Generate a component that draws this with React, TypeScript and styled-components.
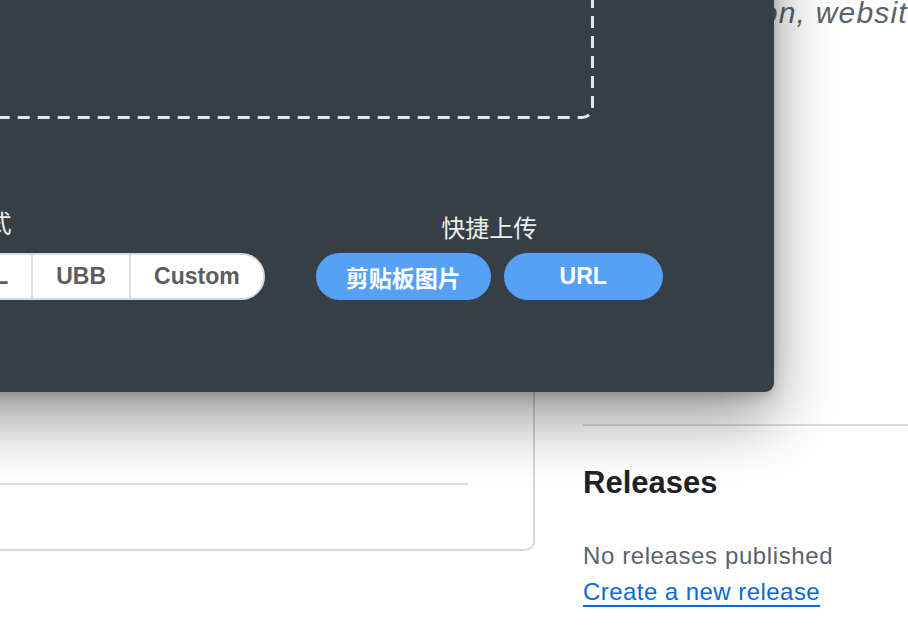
import React from 'react';
import styled, { createGlobalStyle } from 'styled-components';

const GlobalStyle = createGlobalStyle`
  html, body {
    margin: 0;
    padding: 0;
    background: #ffffff;
  }
  body {
    font-family: 'Liberation Sans', 'Noto Sans CJK SC', sans-serif;
  }
`;

const formats = ['URL', 'Markdown', 'HTML', 'UBB', 'Custom'];
const selectedFormat = 'Markdown';

const Viewport = styled.div`
  position: relative;
  width: 908px;
  height: 636px;
  overflow: hidden;
  background: #ffffff;
`;

/* github repo page behind the upload popup */
const RepoLayout = styled.div`
  display: flex;
  align-items: flex-start;
  gap: 48px;
  margin-left: -401px;
`;

const MainColumn = styled.div`
  width: 936px;
  flex-shrink: 0;
`;

const ReadmeCard = styled.div`
  box-sizing: border-box;
  margin-top: -20px;
  height: 571px;
  border: 2px solid #d0d7de;
  border-radius: 10px;
  background: #ffffff;
  display: flex;
  flex-direction: column;
  justify-content: flex-end;
`;

const CardRule = styled.div`
  height: 2px;
  background: #d8dee4;
  margin-right: 65px;
`;

const CardFooter = styled.div`
  height: 64px;
`;

const Sidebar = styled.aside`
  width: 480px;
  flex-shrink: 0;
  color: #1f2328;
`;

const Description = styled.p`
  margin: -5px 0 0;
  text-indent: 5px;
  font-size: 30px;
  line-height: 36px;
  font-style: italic;
  letter-spacing: 1.2px;
  color: #59636e;
  white-space: nowrap;
`;

const SideRule = styled.div`
  height: 2px;
  margin-top: 393px;
  background: #d8dee4;
`;

const SideHeading = styled.h2`
  margin: 39px 0 0;
  font-size: 31px;
  line-height: 36px;
  font-weight: 700;
  color: #1f2328;
`;

const Muted = styled.div`
  margin-top: 40px;
  font-size: 24px;
  line-height: 30px;
  letter-spacing: 0.6px;
  color: #59636e;
`;

const ReleaseLink = styled.a`
  display: inline-block;
  margin-top: 6px;
  font-size: 24px;
  line-height: 30px;
  letter-spacing: 0.45px;
  color: #0969da;
  text-decoration: underline;
  text-decoration-thickness: 2px;
  text-underline-offset: 5px;
`;

/* upload popup */
const Popup = styled.div`
  position: absolute;
  left: -449px;
  top: -300px;
  width: 1223px;
  box-sizing: border-box;
  padding: 40px 0 92px;
  background: #363f45;
  border-radius: 9px;
  box-shadow: 0 26px 64px rgba(0, 0, 0, 0.42), 0 4px 14px rgba(0, 0, 0, 0.18);
  display: flex;
  flex-direction: column;
  align-items: center;
`;

const DropZone = styled.div`
  width: 863px;
  height: 379px;

  svg {
    display: block;
  }
`;

const ControlRow = styled.div`
  display: flex;
  align-items: flex-end;
  gap: 51px;
  margin-top: 93px;
`;

const ControlGroup = styled.div`
  display: flex;
  flex-direction: column;
  align-items: center;
`;

const GroupLabel = styled.div<{ $gap: number }>`
  font-size: 24px;
  line-height: 24px;
  color: #eceeef;
  margin-bottom: ${(p) => p.$gap}px;
`;

const Segmented = styled.div`
  display: flex;
  height: 47px;
  box-sizing: border-box;
  border: 2px solid #d6d8da;
  border-radius: 24px;
  overflow: hidden;
  background: #ffffff;
`;

const Segment = styled.div<{ $active?: boolean }>`
  display: flex;
  align-items: center;
  padding: 0 23px;
  font-size: 23px;
  font-weight: 700;
  color: ${(p) => (p.$active ? '#ffffff' : '#5b5d60')};
  background: ${(p) => (p.$active ? '#56a0f6' : '#ffffff')};

  & + & {
    border-left: 2px solid #dcdee0;
  }
`;

const ButtonRow = styled.div`
  display: flex;
  gap: 13px;
`;

const PillButton = styled.button`
  height: 47px;
  min-width: 159px;
  padding: 0 30px;
  border: 0;
  border-radius: 24px;
  background: #56a0f6;
  color: #ffffff;
  font-family: 'Liberation Sans', 'Noto Sans CJK SC', sans-serif;
  font-size: 23px;
  font-weight: 700;
`;

const DashedFrame: React.FC<{ w: number; h: number }> = ({ w, h }) => (
  <svg width={w} height={h} viewBox={`0 0 ${w} ${h}`}>
    <rect
      x={1.5}
      y={1.5}
      width={w - 3}
      height={h - 3}
      rx={10}
      fill="none"
      stroke="#e4e6e7"
      strokeWidth={3}
      strokeDasharray="12 8"
    />
  </svg>
);

export default function App() {
  return (
    <>
      <GlobalStyle />
      <Viewport>
        <RepoLayout>
          <MainColumn>
            <ReadmeCard>
              <CardRule />
              <CardFooter />
            </ReadmeCard>
          </MainColumn>

          <Sidebar>
            <Description>No description, website, or topics provided.</Description>
            <SideRule />
            <SideHeading>Releases</SideHeading>
            <Muted>No releases published</Muted>
            <ReleaseLink href="#">Create a new release</ReleaseLink>
          </Sidebar>
        </RepoLayout>

        <Popup>
          <DropZone>
            <DashedFrame w={863} h={379} />
          </DropZone>
          <ControlRow>
            <ControlGroup>
              <GroupLabel $gap={17}>链接格式</GroupLabel>
              <Segmented>
                {formats.map((f) => (
                  <Segment key={f} $active={f === selectedFormat}>
                    {f}
                  </Segment>
                ))}
              </Segmented>
            </ControlGroup>

            <ControlGroup>
              <GroupLabel $gap={12}>快捷上传</GroupLabel>
              <ButtonRow>
                <PillButton>剪贴板图片</PillButton>
                <PillButton>URL</PillButton>
              </ButtonRow>
            </ControlGroup>
          </ControlRow>
        </Popup>
      </Viewport>
    </>
  );
}
